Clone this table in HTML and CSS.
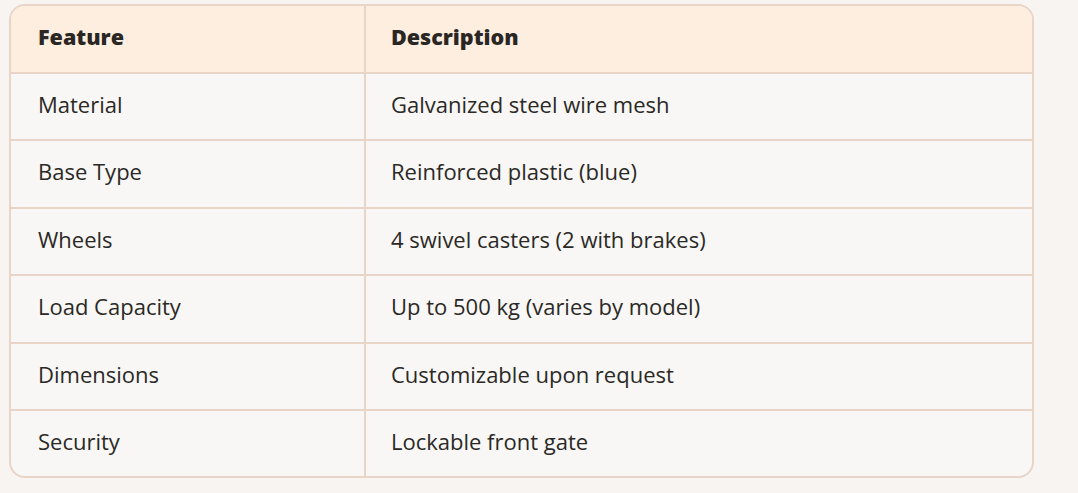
FILE: index.html
```html
<!DOCTYPE html>
<html>
<head>
<meta charset="utf-8">
<link rel="stylesheet" href="styles.css">
</head>
<body>
<div class="table-wrap">
  <table class="spec">
    <thead>
      <tr><th class="col-feature">Feature</th><th>Description</th></tr>
    </thead>
    <tbody>
      <tr><td>Material</td><td>Galvanized steel wire mesh</td></tr>
      <tr><td>Base Type</td><td>Reinforced plastic (blue)</td></tr>
      <tr><td>Wheels</td><td>4 swivel casters (2 with brakes)</td></tr>
      <tr><td>Load Capacity</td><td>Up to 500 kg (varies by model)</td></tr>
      <tr><td>Dimensions</td><td>Customizable upon request</td></tr>
      <tr><td>Security</td><td>Lockable front gate</td></tr>
    </tbody>
  </table>
</div>
</body>
</html>
```

FILE: styles.css
```css
html, body {
  margin: 0;
  background: #f8f4f1;
}
body {
  padding: 4px 0 0 9px;
  font-family: "Open Sans", Lato, sans-serif;
  color: #2b2926;
}
.table-wrap {
  width: 1025px;
  box-sizing: border-box;
  border: 2px solid #e8d5c7;
  border-radius: 16px;
  overflow: hidden;
  background: #f8f7f5;
}
.spec {
  width: 100%;
  border-collapse: collapse;
  font-size: 22px;
  line-height: 24px;
}
.spec th, .spec td {
  text-align: left;
  padding: 18px 26px 23.4px 27px;
  border-bottom: 2px solid #e8d5c7;
  height: 24px;
}
.spec th + th, .spec td + td {
  border-left: 2px solid #e8d5c7;
  padding-left: 25px;
}
.spec tbody tr:last-child td {
  border-bottom: none;
}
.spec thead th {
  background: #fdeee0;
  font-weight: 800;
  font-size: 21.5px;
  color: #2a2623;
  padding-top: 19px;
  padding-bottom: 23px;
}
.col-feature {
  width: 300px;
}
```
